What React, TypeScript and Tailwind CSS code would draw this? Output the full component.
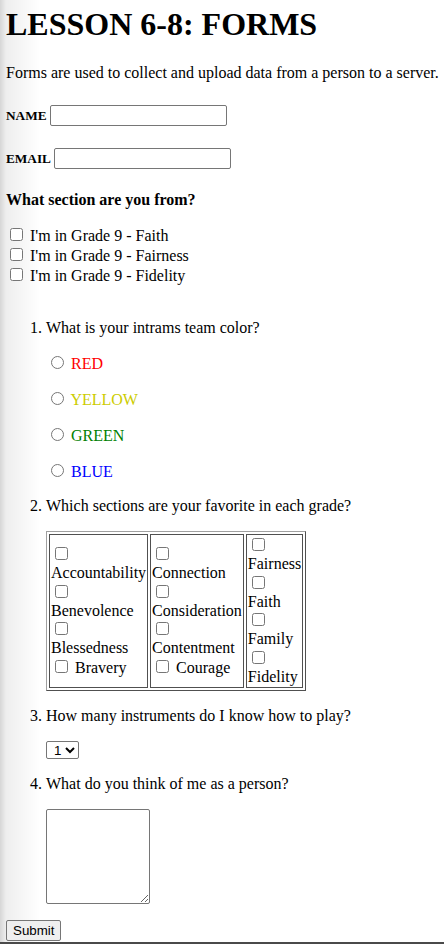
import React from "react";

const box = "m-[3px_3px_3px_4px] align-baseline";
const tbox = "m-[2.5px_3px_2.5px_4px] align-baseline";
const radio = "m-[3px_3px_0px_5px] align-baseline";
const cell = "border border-[#505050] p-px";

const App: React.FC = () => {
  return (
    <div className="min-h-screen pt-[6px] pl-[6px] text-black text-[16px] leading-[normal] font-['Liberation_Serif',serif] bg-[linear-gradient(to_right,#d6d6d6,#eeeeee_6px,#ffffff_40px)]">
      {/* Title */}
      <h1 className="text-[32px] font-bold leading-[normal] mb-[21.44px]">
        LESSON 6-8: FORMS
      </h1>
      <p className="my-4 whitespace-nowrap">
        Forms are used to collect and upload data from a person to a server.
      </p>

      <form>
        {/* Name / email */}
        <h5 className="text-[13.28px] font-bold leading-[normal] my-[22.18px]">
          NAME{" "}
          <input
            type="text"
            className="w-[177px] h-[21px] border border-[#767676] rounded-[2px] px-[2px] bg-white align-baseline font-['Liberation_Sans',sans-serif] text-[13.33px] font-normal"
          />
        </h5>
        <h5 className="text-[13.28px] font-bold leading-[normal] my-[22.18px]">
          EMAIL{" "}
          <input
            type="email"
            className="w-[177px] h-[21px] border border-[#767676] rounded-[2px] px-[2px] bg-white align-baseline font-['Liberation_Sans',sans-serif] text-[13.33px] font-normal"
          />
        </h5>

        <p className="my-4 font-bold">What section are you from?</p>
        <div className="leading-[19px]">
          <input type="checkbox" className={box} /> I'm in Grade 9 - Faith
          <br />
          <input type="checkbox" className={box} /> I'm in Grade 9 - Fairness
          <br />
          <input type="checkbox" className={box} /> I'm in Grade 9 - Fidelity
          <br />
          <br />
        </div>

        {/* Questions */}
        <ol className="list-decimal pl-10 mt-[15px] mb-4">
          <li>
            What is your intrams team color?
            <p className="my-4">
              <input type="radio" name="color" className={radio} />{" "}
              <span className="text-[#ff0000]">RED</span>
            </p>
            <p className="my-4">
              <input type="radio" name="color" className={radio} />{" "}
              <span className="text-[#cccc00]">YELLOW</span>
            </p>
            <p className="my-4">
              <input type="radio" name="color" className={radio} />{" "}
              <span className="text-[#008000]">GREEN</span>
            </p>
            <p className="my-4">
              <input type="radio" name="color" className={radio} />{" "}
              <span className="text-[#0000ff]">BLUE</span>
            </p>
          </li>
          <li>
            Which sections are your favorite in each grade?
            <table className="my-4 border-separate border-spacing-[2px] border border-t-[#a0a0a0] border-l-[#a0a0a0] border-b-[#505050] border-r-[#505050]">
              <tbody>
                <tr>
                  <td className={cell}>
                    <input type="checkbox" className={tbox} />
                    <br />
                    Accountability
                    <br />
                    <input type="checkbox" className={tbox} />
                    <br />
                    Benevolence
                    <br />
                    <input type="checkbox" className={tbox} />
                    <br />
                    Blessedness
                    <br />
                    <input type="checkbox" className={tbox} /> Bravery
                  </td>
                  <td className={cell}>
                    <input type="checkbox" className={tbox} />
                    <br />
                    Connection
                    <br />
                    <input type="checkbox" className={tbox} />
                    <br />
                    Consideration
                    <br />
                    <input type="checkbox" className={tbox} />
                    <br />
                    Contentment
                    <br />
                    <input type="checkbox" className={tbox} /> Courage
                  </td>
                  <td className={cell}>
                    <input type="checkbox" className={tbox} />
                    <br />
                    Fairness
                    <br />
                    <input type="checkbox" className={tbox} />
                    <br />
                    Faith
                    <br />
                    <input type="checkbox" className={tbox} />
                    <br />
                    Family
                    <br />
                    <input type="checkbox" className={tbox} />
                    <br />
                    Fidelity
                  </td>
                </tr>
              </tbody>
            </table>
          </li>
          <li>
            How many instruments do I know how to play?
            <p className="my-4">
              <select className="h-[18px] border border-[#767676] rounded-[2px] bg-white pl-[3px] font-['Liberation_Sans',sans-serif] text-[13.33px] align-baseline">
                <option>1</option>
                <option>2</option>
                <option>3</option>
              </select>
            </p>
          </li>
          <li>
            What do you think of me as a person?
            <p className="my-4">
              <textarea className="w-[104px] h-[95px] border border-[#767676] rounded-[2px] bg-white align-bottom p-[2px] font-['Liberation_Mono',monospace] text-[13.33px]" />
            </p>
          </li>
        </ol>

        <button
          type="submit"
          className="px-[6px] h-[21px] border border-[#767676] rounded-[2px] bg-[#efefef] font-['Liberation_Sans',sans-serif] text-[13.33px] leading-[normal]"
        >
          Submit
        </button>
      </form>
      <div className="mt-[1px] h-[2px] -ml-[6px] bg-[#4a4a4a]" />
    </div>
  );
};

export default App;
